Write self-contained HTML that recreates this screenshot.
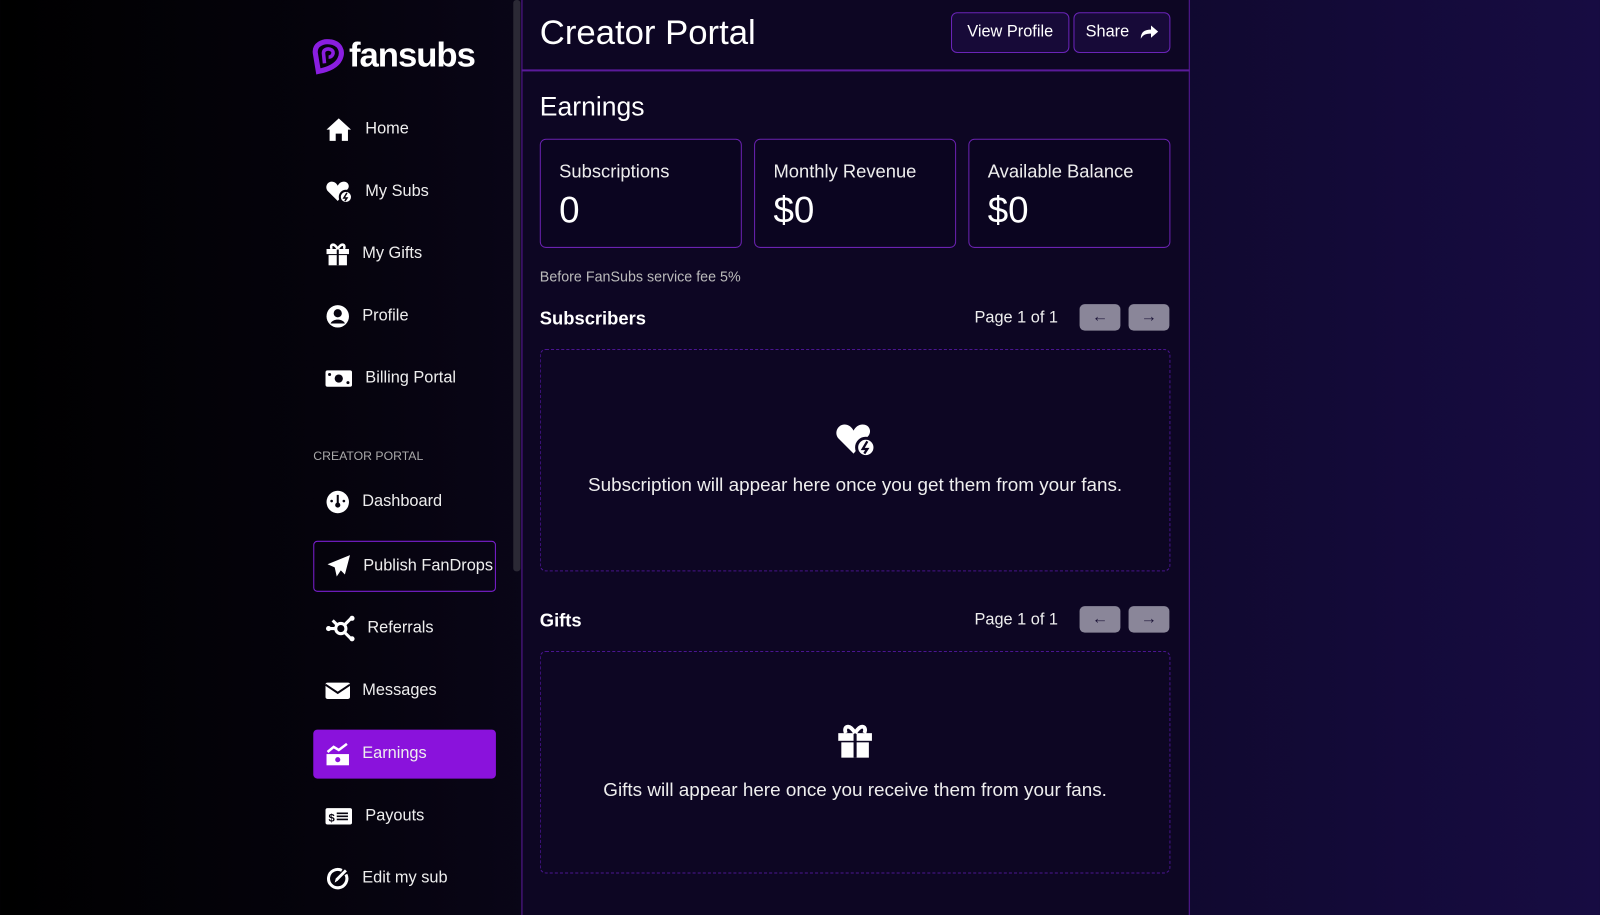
<!DOCTYPE html>
<html><head><meta charset="utf-8"><style>
*{box-sizing:border-box;margin:0;padding:0}
body{width:1600px;height:897px;overflow:hidden;font-family:"Liberation Sans",sans-serif;color:#fff;background:linear-gradient(90deg,#000 0%,#05030c 20%,#0a0619 35%,#0d0724 60%,#130a38 85%,#170c42 100%);position:relative}
#w{position:absolute;left:0;top:0;width:1568px;height:879px;transform:scale(1.0204);transform-origin:0 0}
.a{position:absolute}
.nav{position:absolute;left:307px;width:179px;height:48px;display:flex;align-items:center;font-size:16px;color:#eee}
.nav svg{position:absolute;left:12px}
.nav span{position:absolute}
.main{left:511px;top:0;width:655px;height:897px;background:#0d0623;border-left:1.5px solid #5a1a9a;border-right:1.5px solid #5a1a9a}
.btn{border:1.5px solid #6a24b8;border-radius:6px;background:#170a38;font-size:16px;height:40px;top:12px;display:flex;align-items:center;justify-content:center}
.card{top:136px;width:198px;height:107px;border:1.5px solid #6a22b0;border-radius:6px;background:#0b0520;padding:21px 18px}
.card .l{font-size:18px;color:#eee}
.card .v{font-size:36px;margin-top:6px}
.pg{font-size:16px;color:#eee}
.pb{width:40px;height:26px;background:#8a8699;border-radius:5px;display:flex;align-items:center;justify-content:center;color:#1a1236;font-size:16px}
.box{left:529px;width:618px;height:218px;border:1.5px dashed #4a1590;border-radius:6px;text-align:center;font-size:18.5px;color:#eee}
</style></head><body><div id="w">
<div class="a" style="left:503px;top:0;width:7px;height:560px;background:#2b2935;border-radius:3px"></div>
<svg class="a" style="left:306px;top:38px" width="34" height="36" viewBox="0 0 34 36"><path d="M6 32 L3 14 C2 6 10 2 17 3 C27 4 31 12 27 20 C24 26 16 30 6 32Z" fill="none" stroke="#8a1ee0" stroke-width="5"/><path d="M12 24 L11 14 C11 10 16 9 19 11 C22 13 20 18 16 18" fill="none" stroke="#8a1ee0" stroke-width="3.5"/></svg>
<div class="a" style="left:342px;top:35px;font-size:34px;font-weight:bold;letter-spacing:-1px">fansubs</div>
<div class="nav" style="top:103px"><svg width="26" height="24" viewBox="0 0 26 24"><path d="M13 1 L1 12 H4 V23 H10 V16 H16 V23 H22 V12 H25Z" fill="#fff"/></svg><span style="left:51px">Home</span></div>
<div class="nav" style="top:164px"><svg width="26" height="24" viewBox="0 0 26 24"><path d="M12 21 L2 11 C-1 7 2 2 6 2 C9 2 11 4 12 6 C13 4 15 2 18 2 C22 2 24 6 22 9Z" fill="#fff"/><circle cx="20" cy="17" r="6" fill="#fff" stroke="#07040f" stroke-width="2"/><path d="M21 13 L18 18 H21 L19 21" stroke="#07040f" stroke-width="1.5" fill="none"/></svg><span style="left:51px">My Subs</span></div>
<div class="nav" style="top:225px"><svg width="24" height="24" viewBox="0 0 24 24"><rect x="1" y="7" width="22" height="5" fill="#fff"/><rect x="3" y="13" width="18" height="10" fill="#fff"/><rect x="11" y="7" width="2" height="16" fill="#07040f"/><path d="M12 7 C8 0 4 3 6 7 M12 7 C16 0 20 3 18 7" stroke="#fff" stroke-width="2.5" fill="none"/></svg><span style="left:48px">My Gifts</span></div>
<div class="nav" style="top:286px"><svg width="24" height="24" viewBox="0 0 24 24"><circle cx="12" cy="12" r="11" fill="#fff"/><circle cx="12" cy="9" r="4" fill="#07040f"/><path d="M5 19 C7 14 17 14 19 19" fill="#07040f"/></svg><span style="left:48px">Profile</span></div>
<div class="nav" style="top:347px"><svg width="26" height="20" viewBox="0 0 26 20"><rect x="0" y="2" width="26" height="16" rx="2" fill="#fff"/><circle cx="13" cy="10" r="4" fill="#07040f"/><circle cx="4" cy="6" r="1.5" fill="#07040f"/><circle cx="22" cy="14" r="1.5" fill="#07040f"/></svg><span style="left:51px">Billing Portal</span></div>
<div class="a" style="left:307px;top:440px;font-size:12px;color:#aaa">CREATOR PORTAL</div>
<div class="nav" style="top:468px"><svg width="24" height="24" viewBox="0 0 24 24"><circle cx="12" cy="12" r="11" fill="#fff"/><rect x="11" y="5" width="2" height="9" fill="#07040f"/><circle cx="12" cy="15" r="2.5" fill="#07040f"/><circle cx="6" cy="11" r="1.3" fill="#07040f"/><circle cx="18" cy="11" r="1.3" fill="#07040f"/></svg><span style="left:48px">Dashboard</span></div>
<div class="nav" style="top:530px;border:1.5px solid #7a1fd0;border-radius:4px;height:50px"><svg width="24" height="24" viewBox="0 0 24 24"><path d="M23 1 L1 10 L8 13 L10 22 L14 16 L18 20Z" fill="#fff"/></svg><span style="left:48px">Publish FanDrops</span></div>
<div class="nav" style="top:592px"><svg width="30" height="26" viewBox="0 0 30 26"><circle cx="15" cy="13" r="5" fill="none" stroke="#fff" stroke-width="3"/><path d="M2 13 H10 M19 9 L25 3 M19 17 L25 23 M11 9 L7 5" stroke="#fff" stroke-width="3"/><circle cx="3" cy="13" r="2.5" fill="#fff"/><circle cx="26" cy="3" r="2.5" fill="#fff"/><circle cx="26" cy="23" r="2.5" fill="#fff"/></svg><span style="left:53px">Referrals</span></div>
<div class="nav" style="top:653px"><svg width="24" height="20" viewBox="0 0 24 20"><rect x="0" y="2" width="24" height="16" rx="2" fill="#fff"/><path d="M0 4 L12 12 L24 4" stroke="#07040f" stroke-width="2" fill="none"/></svg><span style="left:48px">Messages</span></div>
<div class="nav" style="top:715px;background:#8a12dc;border-radius:4px"><svg width="24" height="24" viewBox="0 0 24 24"><rect x="1" y="12" width="22" height="11" fill="#fff"/><circle cx="12" cy="17.5" r="2.5" fill="#8a12dc"/><path d="M2 10 L8 5 L13 8 L21 2" stroke="#fff" stroke-width="2.5" fill="none"/></svg><span style="left:48px">Earnings</span></div>
<div class="nav" style="top:776px"><svg width="26" height="20" viewBox="0 0 26 20"><rect x="0" y="2" width="26" height="16" rx="2" fill="#fff"/><text x="3" y="15" font-size="11" font-weight="bold" fill="#07040f" font-family="Liberation Sans">$</text><path d="M11 7 H22 M11 10 H22 M11 13 H22" stroke="#07040f" stroke-width="1.6"/></svg><span style="left:51px">Payouts</span></div>
<div class="nav" style="top:837px"><svg width="24" height="24" viewBox="0 0 24 24"><path d="M20 8 A9 9 0 1 1 16 4" stroke="#fff" stroke-width="3" fill="none"/><path d="M9 16 L10 12 L19 3 L21 5 L12 14Z" fill="#fff"/></svg><span style="left:48px">Edit my sub</span></div>

<div class="a main"></div>
<div class="a" style="left:511px;top:68px;width:655px;height:1.5px;background:#5a1a9a"></div>
<div class="a" style="left:529px;top:13px;font-size:34px">Creator Portal</div>
<div class="a btn" style="left:932px;width:116px">View Profile</div>
<div class="a btn" style="left:1052px;width:95px">Share&nbsp;<svg width="18" height="14" viewBox="0 0 18 14" style="margin-left:6px"><path d="M11 0 L18 6 L11 12 V8 C6 8 3 9 1 13 C1 7 4 4 11 4Z" fill="#fff"/></svg></div>
<div class="a" style="left:529px;top:89px;font-size:26px">Earnings</div>
<div class="a card" style="left:529px"><div class="l">Subscriptions</div><div class="v">0</div></div>
<div class="a card" style="left:739px"><div class="l">Monthly Revenue</div><div class="v">$0</div></div>
<div class="a card" style="left:949px"><div class="l">Available Balance</div><div class="v">$0</div></div>
<div class="a" style="left:529px;top:263px;font-size:14px;color:#bbb">Before FanSubs service fee 5%</div>

<div class="a" style="left:529px;top:302px;font-size:18px;font-weight:bold">Subscribers</div>
<div class="a pg" style="left:955px;top:303px">Page 1 of 1</div>
<div class="a pb" style="left:1058px;top:298px">&larr;</div>
<div class="a pb" style="left:1106px;top:298px">&rarr;</div>
<div class="a box" style="top:342px"><svg width="42" height="36" viewBox="0 0 26 24" style="margin-top:70px"><path d="M12 21 L2 11 C-1 7 2 2 6 2 C9 2 11 4 12 6 C13 4 15 2 18 2 C22 2 24 6 22 9Z" fill="#fff"/><circle cx="20" cy="17" r="6" fill="#fff" stroke="#0d0623" stroke-width="2"/><path d="M21 13 L18 18 H21 L19 21" stroke="#0d0623" stroke-width="1.5" fill="none"/></svg><div style="margin-top:10px">Subscription will appear here once you get them from your fans.</div></div>

<div class="a" style="left:529px;top:598px;font-size:18px;font-weight:bold">Gifts</div>
<div class="a pg" style="left:955px;top:599px">Page 1 of 1</div>
<div class="a pb" style="left:1058px;top:594px">&larr;</div>
<div class="a pb" style="left:1106px;top:594px">&rarr;</div>
<div class="a box" style="top:638px"><svg width="36" height="36" viewBox="0 0 24 24" style="margin-top:69px"><rect x="1" y="7" width="22" height="5" fill="#fff"/><rect x="3" y="13" width="18" height="10" fill="#fff"/><rect x="11" y="7" width="2" height="16" fill="#0d0623"/><path d="M12 7 C8 0 4 3 6 7 M12 7 C16 0 20 3 18 7" stroke="#fff" stroke-width="2.5" fill="none"/></svg><div style="margin-top:14px">Gifts will appear here once you receive them from your fans.</div></div>
</div></body></html>
